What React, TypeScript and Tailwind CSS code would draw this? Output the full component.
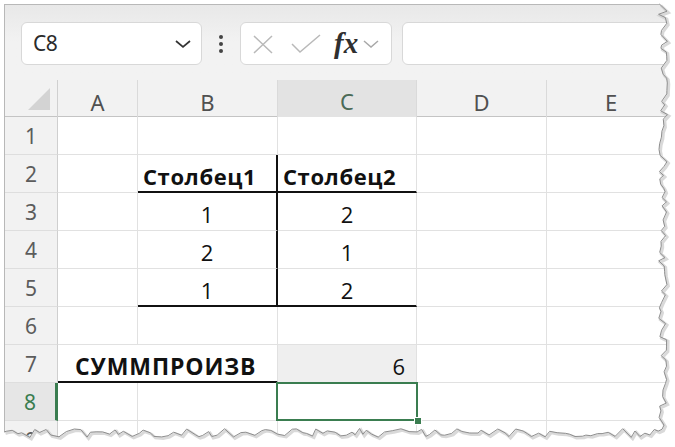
import React from "react";

const cellFont = { fontFamily: '"Open Sans", "Liberation Sans", sans-serif' };
const uiFont = { fontFamily: '"Noto Sans", "Open Sans", sans-serif' };

function rng(seed: number) {
  let s = seed;
  return () => {
    s = (s * 16807) % 2147483647;
    return (s - 1) / 2147483646;
  };
}

function TornEdge() {
  const r = rng(12345);
  const right: [number, number][] = [];
  for (let y = 4; y < 430; y += 3 + r() * 5) right.push([663 + (r() - 0.5) * 9, y]);
  const bottom: [number, number][] = [];
  for (let x = 662; x > 2; x -= 3 + r() * 6) bottom.push([x, 433 + (r() - 0.5) * 9]);
  bottom.push([4, 432]);
  const pts = [...right, ...bottom];
  const line = pts.map((p, i) => `${i ? "L" : "M"}${p[0].toFixed(1)},${p[1].toFixed(1)}`).join(" ");
  const mask = `M675,0 L${right[0][0].toFixed(1)},0 ${line.replace(/^M/, "L")} L0,447 L675,447 Z`;
  return (
    <svg className="pointer-events-none absolute left-0 top-0 z-30" width="675" height="447" viewBox="0 0 675 447">
      <path d={mask} fill="#ffffff" />
      <path d={line} fill="none" stroke="#d0d0d0" strokeWidth="3" transform="translate(1.5,1.5)" opacity="0.8" />
      <path d={line} fill="none" stroke="#8e8e8e" strokeWidth="1" />
    </svg>
  );
}

const cols = "grid grid-cols-[53px_80px_140px_139px_130px_1fr]";

type CellProps = { className?: string; children?: React.ReactNode };
const Cell = ({ className = "", children }: CellProps) => (
  <div className={`relative flex h-[38px] items-center border-[#e1e1e1] text-[22px] text-[#111] ${className}`} style={cellFont}>
    {children}
  </div>
);

const RowHead = ({ n, active }: { n: number; active?: boolean }) => (
  <div
    className={`flex h-[38px] items-center justify-center border-b text-[21px] ${
      active
        ? "border-r-[3px] border-b-[#dedede] border-r-[#3a7d50] bg-[#e6e6e6] text-[#3a7d50]"
        : "border-r border-[#dedede] border-r-[#cfcfcf] bg-[#f2f2f2] text-[#5c5c5c]"
    }`}
    style={uiFont}
  >
    <span className="pt-[3px]">{n}</span>
  </div>
);

export default function App() {
  const g = "border-b border-r";
  return (
    <div className="relative h-[447px] w-[675px] overflow-hidden bg-white pl-[4px] pt-[4px]">
      <div className="flex h-[443px] w-[671px] flex-col overflow-hidden border-l border-t border-[#b8b8b8] bg-[#f2f2f2]">
        {/* toolbar */}
        <div className="flex h-[75px] shrink-0 items-start bg-linear-to-b from-[#e8e8e8] via-[#f2f2f2] to-[#f2f2f2] pl-[16px] pt-[17px]">
          <div className="flex h-[43px] w-[181px] items-center justify-between rounded-[6px] border border-[#d8d8d8] bg-white pl-[11px] pr-[9px]">
            <span className="text-[21px] tracking-[-0.5px] text-[#2b2b2b]" style={uiFont}>C8</span>
            <svg width="18" height="10" viewBox="0 0 18 10">
              <path d="M2 2 L9 8 L16 2" fill="none" stroke="#333" strokeWidth="1.7" />
            </svg>
          </div>
          <div className="flex h-[43px] w-[38px] flex-col items-center justify-center gap-[3px]">
            <span className="h-[4px] w-[4px] rounded-full bg-[#444]" />
            <span className="h-[4px] w-[4px] rounded-full bg-[#444]" />
            <span className="h-[4px] w-[4px] rounded-full bg-[#444]" />
          </div>
          <div className="flex h-[43px] w-[152px] items-center rounded-[6px] border border-[#d8d8d8] bg-white pl-[11px]">
            <svg width="22" height="22" viewBox="0 0 22 22">
              <path d="M2 3 L20 20 M20 3 L2 20" stroke="#b9b9b9" strokeWidth="1.5" fill="none" />
            </svg>
            <svg width="32" height="22" viewBox="0 0 32 22" className="ml-[16px]">
              <path d="M2 11 L10 19 L30 2" stroke="#b9b9b9" strokeWidth="1.5" fill="none" />
            </svg>
            <span
              className="ml-[12px] text-[29px] font-bold italic leading-none text-[#2f2f2f]"
              style={{ fontFamily: '"Liberation Serif", "DejaVu Serif", serif' }}
            >
              fx
            </span>
            <svg width="18" height="10" viewBox="0 0 18 10" className="ml-[4px]">
              <path d="M2 2 L9 8 L16 2" fill="none" stroke="#a8a8a8" strokeWidth="1.5" />
            </svg>
          </div>
          <div className="ml-[10px] h-[43px] flex-1 rounded-[6px] border border-[#d8d8d8] bg-white" />
        </div>

        {/* column headers */}
        <div className={`${cols} h-[37px] shrink-0 border-b border-[#c4c4c4] text-[22px] text-[#505050]`} style={uiFont}>
          <div className="relative border-r border-[#d0d0d0]">
            <svg className="absolute left-[23px] top-[8px]" width="23" height="23" viewBox="0 0 23 23">
              <path d="M0 22 L22 22 L22 0 Z" fill="#d3d3d3" />
            </svg>
          </div>
          <div className="flex items-center justify-center border-r border-[#dadada] pt-[3px]">A</div>
          <div className="flex items-center justify-center border-r border-[#dadada] pt-[3px]">B</div>
          <div className="flex items-center justify-center border-b-[3px] border-r border-[#dadada] border-b-[#3a7d50] bg-[#e3e3e3] pt-[5px] text-[#4b6a56]">C</div>
          <div className="flex items-center justify-center border-r border-[#dadada] pt-[3px]">D</div>
          <div className="flex items-center justify-center pt-[3px]">E</div>
        </div>

        {/* rows */}
        <div className="flex-1 bg-white">
          {/* row 1 */}
          <div className={cols}>
            <RowHead n={1} />
            <Cell className={g} />
            <Cell className={g} />
            <Cell className={g} />
            <Cell className={g} />
            <Cell className="border-b" />
          </div>
          {/* row 2 */}
          <div className={cols}>
            <RowHead n={2} />
            <Cell className={g} />
            <Cell className="border-b-2 border-r-2 border-b-[#111] border-r-[#111] pl-[5px] pt-[6px] font-bold tracking-[0.6px]">Столбец1</Cell>
            <Cell className="border-b-2 border-r border-b-[#111] pl-[5px] pt-[6px] font-bold tracking-[0.6px]">Столбец2</Cell>
            <Cell className={g} />
            <Cell className="border-b" />
          </div>
          {[
            [3, "1", "2"],
            [4, "2", "1"],
            [5, "1", "2"],
          ].map(([n, b, c]) => (
            <div className={cols} key={n}>
              <RowHead n={n as number} />
              <Cell className={g} />
              <Cell
                className={`justify-center border-r-2 border-r-[#111] pt-[6px] ${
                  n === 5 ? "border-b-2 border-b-[#111]" : "border-b"
                }`}
              >
                {b}
              </Cell>
              <Cell className={`justify-center border-r pt-[6px] ${n === 5 ? "border-b-2 border-b-[#111]" : "border-b"}`}>
                {c}
              </Cell>
              <Cell className={g} />
              <Cell className="border-b" />
            </div>
          ))}
          {/* row 6 */}
          <div className={cols}>
            <RowHead n={6} />
            <Cell className={g} />
            <Cell className={g} />
            <Cell className={g} />
            <Cell className={g} />
            <Cell className="border-b" />
          </div>
          {/* row 7 */}
          <div className={cols}>
            <RowHead n={7} />
            <Cell className="z-10 border-b-2 border-b-[#111] pl-[17px] pt-[6px]">
              <span className="whitespace-nowrap text-[23px] font-bold tracking-[0.9px]">СУММПРОИЗВ</span>
            </Cell>
            <Cell className="border-b-2 border-r border-b-[#111]" />
            <Cell className={`${g} justify-end bg-[#efefef] pr-[11px] pt-[6px]`}>6</Cell>
            <Cell className={g} />
            <Cell className="border-b" />
          </div>
          {/* row 8 */}
          <div className={cols}>
            <RowHead n={8} active />
            <Cell className={g} />
            <Cell className={g} />
            <Cell className={`${g} z-20`}>
              <div className="absolute -left-[2px] -top-[1px] bottom-[-1px] right-[-2px] border-2 border-[#3a7d50]" />
              <div className="absolute bottom-[-5px] right-[-6px] h-[8px] w-[8px] border border-white bg-[#3a7d50]" />
            </Cell>
            <Cell className={g} />
            <Cell className="border-b" />
          </div>
          {/* row 9 */}
          <div className={cols}>
            <RowHead n={9} />
            <Cell className={g} />
            <Cell className={g} />
            <Cell className={g} />
            <Cell className={g} />
            <Cell className="border-b" />
          </div>
        </div>
      </div>
      <TornEdge />
    </div>
  );
}
